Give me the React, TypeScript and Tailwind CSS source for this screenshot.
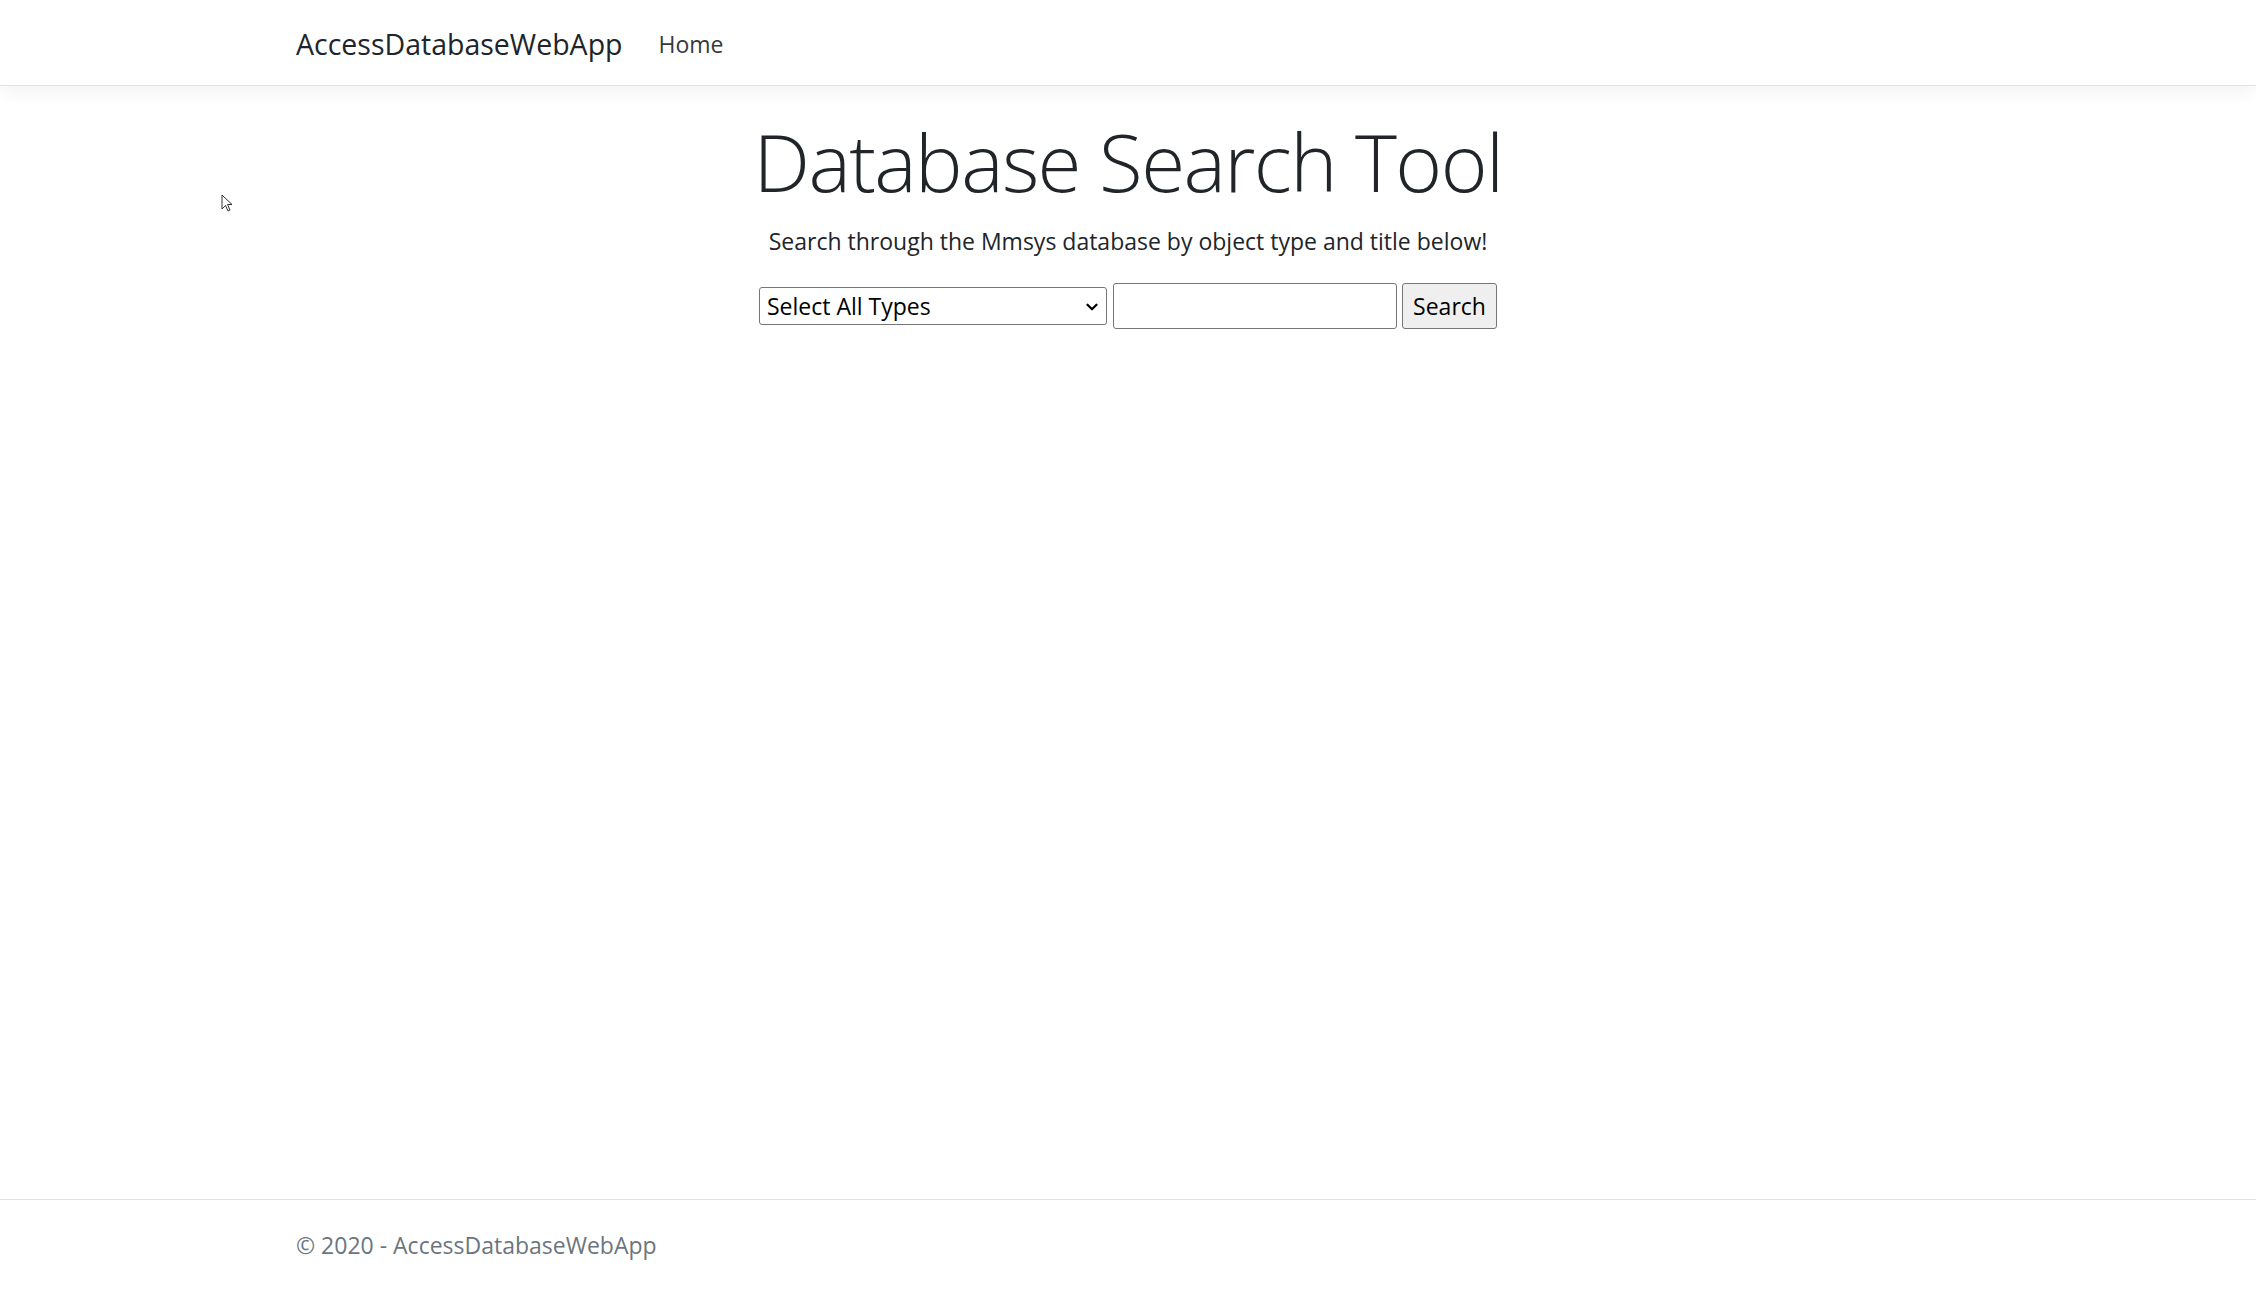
import { ChevronDown } from 'lucide-react';

// Mouse pointer that sits over the page in the screenshot
function Pointer() {
  return (
    <svg className="absolute left-[221px] top-[194px]" width="14" height="20" viewBox="0 0 14 20">
      <path d="M1 1 L1 15 L4.5 11.5 L7 17 L9 16 L6.5 10.5 L11 10.5 Z" fill="#fff" stroke="#333" strokeWidth="1" />
    </svg>
  );
}

export default function App() {
  return (
    <div className="relative min-h-[1290px] flex flex-col bg-white font-['Open_Sans','Noto_Sans',sans-serif] text-[#212529]">
      <Pointer />

      {/* Navbar */}
      <header className="h-[86px] bg-white border-b border-[#dee2e6] shadow-[0_6px_18px_rgba(0,0,0,0.05)]">
        <div className="w-[1710px] mx-auto px-[23px] pt-[3px] h-full flex items-center">
          <span className="text-[28.5px] text-[#212529] mr-[24px]">AccessDatabaseWebApp</span>
          <span className="text-[23px] text-[#343a40] px-[12px]">Home</span>
        </div>
      </header>

      {/* Main */}
      <main className="flex-1 mt-[24px] w-[1710px] mx-auto px-[23px] text-center">
        <h1 className="text-[80px] font-light leading-[101px] tracking-[-1.6px] mb-[12px]">Database Search Tool</h1>
        <p className="text-[23px] leading-[36px] mb-[24px]">
          Search through the Mmsys database by object type and title below!
        </p>
        <div className="flex items-center justify-center">
          <div className="relative w-[348px] h-[38px] border border-[#767676] rounded-[3px] bg-white flex items-center pl-[7px] text-[23px] text-black">
            <span>Select All Types</span>
            <ChevronDown className="absolute right-[5px] top-[10px] w-[18px] h-[18px]" strokeWidth={3} />
          </div>
          <input
            type="text"
            className="ml-[6px] w-[284px] h-[46px] border-[1.5px] border-[#767676] rounded-[3px] bg-white outline-none px-[3px] text-[23px]"
          />
          <button className="ml-[5px] w-[95px] h-[46px] border-[1.5px] border-[#767676] rounded-[3px] bg-[#efefef] text-[23px] text-black">
            Search
          </button>
        </div>
      </main>

      {/* Footer */}
      <footer className="h-[91px] border-t border-[#dee2e6]">
        <div className="w-[1710px] mx-auto px-[23px] h-full flex items-center">
          <span className="text-[23px] text-[#6c757d]">© 2020 - AccessDatabaseWebApp</span>
        </div>
      </footer>
    </div>
  );
}
